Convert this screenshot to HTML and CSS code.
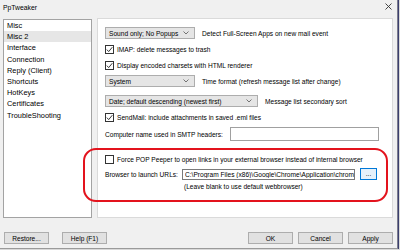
FILE: index.html
```html
<!DOCTYPE html>
<html>
<head>
<meta charset="utf-8">
<link rel="stylesheet" href="styles.css">
</head>
<body>
<div class="window">
  <div class="titlebar">
    <span class="title">PpTweaker</span>
    <svg class="close" width="7" height="7" viewBox="0 0 7 7"><path d="M0.5 0.5 L6.5 6.5 M6.5 0.5 L0.5 6.5" stroke="#333" stroke-width="0.9" fill="none"/></svg>
  </div>
  <div class="main">
    <ul class="list">
      <li>Misc</li>
      <li class="sel">Misc 2</li>
      <li>Interface</li>
      <li>Connection</li>
      <li>Reply (Client)</li>
      <li>Shortcuts</li>
      <li>HotKeys</li>
      <li>Certificates</li>
      <li>TroubleShooting</li>
    </ul>
    <div class="page">
      <div class="row r1">
        <div class="combo c-sound"><span>Sound only; No Popups</span><svg class="arrow" width="6" height="4" viewBox="0 0 6 4"><path d="M0.5 0.5 L3 3 L5.5 0.5" stroke="#555" stroke-width="0.8" fill="none"/></svg></div>
        <span class="lbl">Detect Full-Screen Apps on new mail event</span>
      </div>
      <div class="row chk r2">
        <span class="cb"><svg width="7" height="7" viewBox="0 0 7 7"><path d="M0.8 3.6 L2.7 5.6 L6.3 1.2" stroke="#222" stroke-width="0.9" fill="none"/></svg></span>
        <span>IMAP: delete messages to trash</span>
      </div>
      <div class="row chk r3">
        <span class="cb"><svg width="7" height="7" viewBox="0 0 7 7"><path d="M0.8 3.6 L2.7 5.6 L6.3 1.2" stroke="#222" stroke-width="0.9" fill="none"/></svg></span>
        <span>Display encoded charsets with HTML renderer</span>
      </div>
      <div class="row r4">
        <div class="combo c-sound"><span>System</span><svg class="arrow" width="6" height="4" viewBox="0 0 6 4"><path d="M0.5 0.5 L3 3 L5.5 0.5" stroke="#555" stroke-width="0.8" fill="none"/></svg></div>
        <span class="lbl">Time format (refresh message list after change)</span>
      </div>
      <div class="row r5">
        <div class="combo c-date"><span>Date; default descending (newest first)</span><svg class="arrow" width="6" height="4" viewBox="0 0 6 4"><path d="M0.5 0.5 L3 3 L5.5 0.5" stroke="#555" stroke-width="0.8" fill="none"/></svg></div>
        <span class="lbl">Message list secondary sort</span>
      </div>
      <div class="row chk r6">
        <span class="cb"><svg width="7" height="7" viewBox="0 0 7 7"><path d="M0.8 3.6 L2.7 5.6 L6.3 1.2" stroke="#222" stroke-width="0.9" fill="none"/></svg></span>
        <span>SendMail: include attachments in saved .eml files</span>
      </div>
      <div class="row r7">
        <span class="lbl-left">Computer name used in SMTP headers:</span>
        <div class="input in-computer"></div>
      </div>
      <div class="row chk r8">
        <span class="cb"></span>
        <span>Force POP Peeper to open links in your external browser instead of internal browser</span>
      </div>
      <div class="row r9">
        <span class="lbl-left">Browser to launch URLs:</span>
        <div class="input in-browser"><span class="path">C:\Program Files (x86)\Google\Chrome\Application\chrome</span></div>
        <div class="dots">...</div>
      </div>
      <div class="row r10">
        <span class="hint">(Leave blank to use default webbrowser)</span>
      </div>
    </div>
  </div>
  <div class="buttons">
    <div class="btn">Restore...</div>
    <div class="btn help">Help (F1)</div>
    <div class="spacer"></div>
    <div class="btn">OK</div>
    <div class="btn">Cancel</div>
    <div class="btn">Apply</div>
  </div>
  <div class="annotation"></div>
</div>
</body>
</html>
```
FILE: styles.css
```css
* { box-sizing: border-box; }
html, body {
  margin: 0;
  padding: 0;
}
body {
  width: 400px;
  height: 250px;
  overflow: hidden;
  background: #d9d9d9;
  font-family: "Liberation Sans", Arial, sans-serif;
  font-size: 6.6px;
  color: #000;
}
.window {
  position: relative;
  width: 398px;
  height: 249px;
  background: #f0f0f0;
  border-right: 1px solid #7d7d8f;
  border-bottom: 1px solid #9a9a9a;
  box-shadow: 1px 0 0 #3b3f6e;
}
.titlebar {
  height: 14px;
  display: flex;
  align-items: center;
  justify-content: space-between;
  padding: 0 5px 0 3px;
}
.title { font-size: 6.8px; }
.close { display: block; margin-top: -2px; }
.main {
  display: flex;
  gap: 5px;
  margin-top: 4px;
  padding-left: 3px;
}
.list {
  list-style: none;
  margin: 1px 0 0 0;
  padding: 0;
  width: 89px;
  height: 199px;
  background: #fff;
  border: 1px solid #a3a3a3;
}
.list li {
  height: 11.2px;
  line-height: 11.2px;
  padding-left: 3px;
  font-size: 7.4px;
  white-space: nowrap;
}
.list li.sel { background: #e6e6e6; }
.page {
  width: 296px;
  height: 200px;
  background: #fff;
  border: 1px solid #dadada;
  padding-left: 7px;
  display: flex;
  flex-direction: column;
}
.row {
  display: flex;
  align-items: center;
  white-space: nowrap;
}
.chk { height: 10px; }
.cb {
  width: 9px;
  height: 9px;
  border: 1px solid #333;
  background: #fff;
  display: flex;
  align-items: center;
  justify-content: center;
  margin-right: 3px;
  flex: none;
}
.cb svg { display: block; }
.combo {
  height: 12px;
  background: #e5e5e5;
  border: 1px solid #adadad;
  display: flex;
  align-items: center;
  justify-content: space-between;
  padding: 0 5px 0 3px;
  flex: none;
}
.combo .arrow { display: block; }
.c-sound { width: 90px; }
.c-date { width: 153px; }
.lbl { margin-left: 7px; }
.r1 { margin-top: 8px; }
.r2 { margin-top: 5px; }
.r3 { margin-top: 6px; }
.r4 { margin-top: 5px; }
.r5 { margin-top: 8px; }
.r6 { margin-top: 5px; }
.r7 { margin-top: 5px; height: 14px; }
.r8 { margin-top: 13px; }
.r9 { margin-top: 4px; height: 12px; }
.r10 { margin-top: 2px; height: 8px; }
.lbl-left { width: 125px; flex: none; }
.input {
  background: #fff;
  border: 1px solid #a0a0a0;
  flex: none;
  overflow: hidden;
}
.in-computer { width: 149px; height: 14px; }
.r9 .lbl-left { width: 77px; }
.in-browser {
  width: 173px;
  height: 11px;
  border-color: #7a7a7a;
  display: flex;
  align-items: center;
  padding-left: 2px;
}
.in-browser .path {
  display: block;
  width: 100%;
  overflow: hidden;
  white-space: nowrap;
}
.dots {
  width: 17px;
  height: 12px;
  margin-left: 5px;
  border: 1px solid #0078d7;
  background: #e5f1fb;
  display: flex;
  align-items: center;
  justify-content: center;
  padding-bottom: 2px;
}
.hint { margin-left: 79px; }
.buttons {
  display: flex;
  margin-top: 14px;
  padding: 0 4px;
}
.btn {
  width: 45px;
  height: 12px;
  background: #e1e1e1;
  border: 1px solid #adadad;
  display: flex;
  align-items: center;
  justify-content: center;
  margin-left: 5px;
}
.btn:first-child { margin-left: 0; }
.btn.help { margin-left: 13px; }
.spacer { flex: 1; }
.spacer + .btn { margin-left: 0; }
.annotation {
  position: absolute;
  left: 83px;
  top: 148px;
  width: 305px;
  height: 54px;
  border: 2.5px solid #e3131d;
  border-radius: 13px;
}
```
